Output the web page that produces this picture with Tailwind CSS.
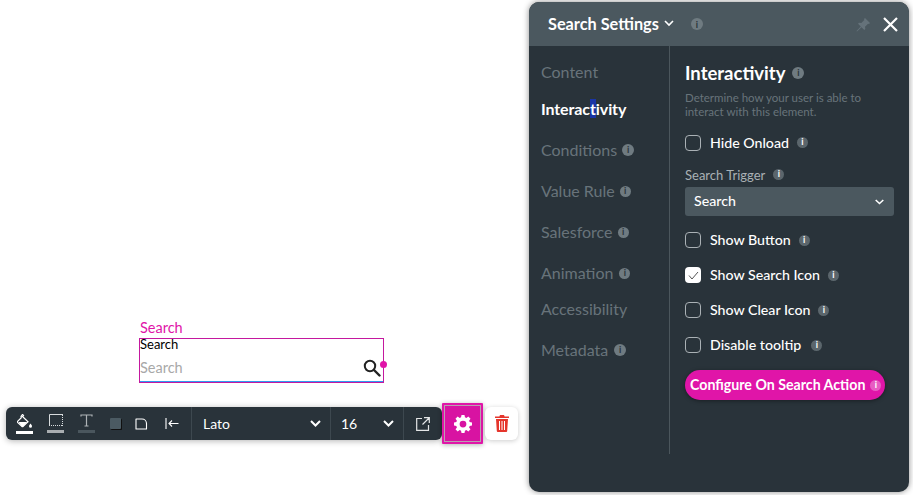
<!DOCTYPE html>
<html lang="en">
<head>
  <meta charset="UTF-8">
  <title>Search Settings</title>
  <script src="https://cdn.jsdelivr.net/npm/@tailwindcss/browser@4"></script>
</head>
<body class="bg-white overflow-hidden font-['Lato',sans-serif]">
  <div class="relative w-[913px] h-[495px] overflow-hidden">

    <!-- Search element on the canvas -->
    <div class="absolute left-[139px] top-[319px] w-[245px]">
      <div class="text-[14.5px] leading-[17px] mb-[2px] text-[#e015a8] pl-px">Search</div>
      <div class="relative h-[45px] border border-[#c4189f] shadow-[inset_0_-1px_0_#2f9bf0]">
        <div class="text-[13px] leading-[11px]">Search</div>
        <div class="flex items-center justify-between pr-[2px] mt-[9px]">
          <span class="text-[14.5px] leading-[18px] text-[#a8a8a8]">Search</span>
          <svg class="w-[18px] h-[18px]" viewBox="0 0 18 18" fill="none" stroke="#222" stroke-width="2"><circle cx="7" cy="7" r="5.2"/><path d="M11 11l5.5 5.5" stroke-linecap="round" stroke-width="2.4"/></svg>
        </div>
        <span class="absolute right-[-4px] top-[22px] w-[7px] h-[7px] rounded-full bg-[#e015a8]"></span>
      </div>
    </div>

    <!-- Toolbar -->
    <div class="absolute left-[6px] top-[403px] flex items-center">
      <div class="flex items-center h-[33px] w-[436px] bg-[#29333a] rounded-[6px] text-white shadow-[0_1px_6px_rgba(0,0,0,0.3)]">
        <div class="flex items-center w-[186px] h-full pl-[10px] border-r border-[#3d484f]">
          <div class="flex flex-col items-center w-[17px]">
            <svg class="w-[16px] h-[15px]" viewBox="0 0 16 15" fill="white"><path d="M5.5 0.5l1 1-1 1 5.500 5.200-4.800 4.600a1 1 0 0 1-1.400 0L0.800 8.600a1 1 0 0 1 0-1.400L4.300 3.700 4 2.400z" fill="none" stroke="white" stroke-width="1.200"/><path d="M1.500 8h8.500l-3.800 4.500h-1.500z"/><path d="M13.500 9.500c1 1.400 1.500 2 1.500 2.800a1.500 1.500 0 0 1-3 0c0-.8.500-1.400 1.500-2.800z"/></svg>
            <span class="w-[17px] h-[3px] bg-white mt-[2px]"></span>
          </div>
          <div class="flex flex-col items-center w-[17px] ml-[14px]">
            <svg class="w-[14px] h-[12px]" viewBox="0 0 14 12" fill="none" stroke="#d8dcde"><path d="M.5 12V.5H14"/><path d="M13.500 1v11M0 11.500h14" stroke-dasharray="1 1"/></svg>
            <span class="w-[17px] h-[3px] bg-[#a9adb0] mt-[4px]"></span>
          </div>
          <div class="flex flex-col items-center w-[17px] ml-[14px]">
            <svg class="w-[13px] h-[13px]" viewBox="0 0 13 13" fill="none" stroke="#aeb3b6" stroke-width="1.200"><path d="M1 2.500V1h11v1.500M6.500 1v11M4.500 12h4"/></svg>
            <span class="w-[17px] h-[3px] bg-[#4a565d] mt-[3px]"></span>
          </div>
          <span class="w-[11px] h-[11px] ml-[15px] bg-[#4b5a62] rounded-[1px] shadow-[1px_1px_0_#111]"></span>
          <svg class="w-[13px] h-[12px] ml-[14px]" viewBox="0 0 13 12" fill="none" stroke="white" stroke-width="1.100"><path d="M1 1h6c2.500 0 4.500 2 4.500 4.500V11H1z" stroke-linejoin="round"/></svg>
          <svg class="w-[14px] h-[11px] ml-[17px]" viewBox="0 0 14 11" fill="none" stroke="white" stroke-width="1.100"><path d="M1 0v11M13.500 5.500H4M7 2.500l-3 3 3 3"/></svg>
        </div>
        <div class="flex items-center justify-between w-[139px] h-full pl-[11px] pr-[9px] border-r border-[#3d484f] text-[14px]">
          <span>Lato</span>
          <svg class="w-[11px] h-[7px]" viewBox="0 0 11 7" fill="none" stroke="white" stroke-width="2"><path d="M1 1l4.500 4.500L10 1"/></svg>
        </div>
        <div class="flex items-center justify-between w-[73px] h-full pl-[10px] pr-[9px] border-r border-[#3d484f] text-[14px]">
          <span>16</span>
          <svg class="w-[11px] h-[7px]" viewBox="0 0 11 7" fill="none" stroke="white" stroke-width="2"><path d="M1 1l4.500 4.500L10 1"/></svg>
        </div>
        <div class="flex items-center justify-center flex-1">
          <svg class="w-[14px] h-[14px]" viewBox="0 0 14 14" fill="none" stroke="#e4e6e7" stroke-width="1.200"><path d="M6 1.500H.7v11.800h11.800V8M8 .7h5.300V6M13 1L6.500 7.500"/></svg>
        </div>
      </div>
      <div class="flex items-center justify-center w-[41px] h-[41px] bg-[#d813a2] border-[3px] border-[#e015a8] outline outline-1 outline-[#b9a0b0] -outline-offset-[3px] rounded-[1px] shadow-[0_1px_5px_rgba(0,0,0,0.3)]">
        <svg class="w-[18px] h-[18px]" viewBox="0 0 24 24" fill="white"><path fill-rule="evenodd" d="M10 1h4l.6 3.100 1.900.8L19.100 3 22 5.900l-1.900 2.600.8 1.900L24 11v4l-3.100.6-.8 1.900 1.900 2.600L19.100 23l-2.600-1.900-1.900.8L14 25h-4l-.6-3.100-1.900-.8L4.900 23 2 20.100l1.900-2.600-.8-1.900L0 15v-4l3.100-.6.8-1.900L2 5.900 4.900 3l2.600 1.900 1.900-.8zM12 8.500a4.500 4.500 0 1 0 0 9 4.500 4.500 0 0 0 0-9z" transform="translate(0 -1)"/></svg>
      </div>
      <div class="flex items-center justify-center w-[33px] h-[33px] ml-[2px] bg-white rounded-[6px] shadow-[0_1px_5px_rgba(0,0,0,0.2)]">
        <svg class="w-[14px] h-[17px]" viewBox="0 0 14 17" fill="#e5352c"><path d="M5 0h4l.6 1.500H14V3H0V1.500h4.400z"/><path fill-rule="evenodd" d="M1 4h12l-.8 12a1 1 0 0 1-1 1H2.800a1 1 0 0 1-1-1zM4 6v9h1V6zm2.500 0v9h1V6zM9 6v9h1V6z"/></svg>
      </div>
    </div>

    <!-- Settings panel -->
    <div class="absolute left-[529px] top-[2px] flex flex-col w-[380px] h-[490px] bg-[#29333a] rounded-[10px] overflow-hidden text-white shadow-[0_0_6px_rgba(0,0,0,0.45)]">
      <div class="flex items-center h-[44px] shrink-0 bg-[#4b585f] pl-[19px] pr-[11px]">
        <span class="text-[16.3px] font-bold">Search Settings</span>
        <svg class="w-[10px] h-[7px] ml-[5px] mb-[2px]" viewBox="0 0 10 7" fill="none" stroke="white" stroke-width="1.600"><path d="M1 1l4 4 4-4"/></svg>
        <span class="flex items-center justify-center w-[12px] h-[12px] ml-[17px] rounded-full bg-[#6f7b81] text-[9px] font-bold leading-none text-[#29333a]">i</span>
        <svg class="w-[15px] h-[15px] ml-auto" viewBox="0 0 15 15" fill="#65727a"><path d="M9 1l5 5-1 1-1-.3-3 3 .3 2.300-1 1-2.800-2.800L1 14.500 .5 14l4.300-4.500L2 6.700l1-1 2.300.3 3-3L8 2z"/></svg>
        <svg class="w-[15px] h-[15px] ml-[12px]" viewBox="0 0 15 15" fill="none" stroke="white" stroke-width="2.200"><path d="M1 1l13 13M14 1L1 14"/></svg>
      </div>

      <div class="flex flex-1 min-h-0">
        <!-- Nav -->
        <div class="w-[141px] h-[408px] shrink-0 border-r border-[#4b565c] pl-[12px] pt-[16px] text-[16px] leading-[20px] text-[#68737a]">
          <div>Content</div>
          <div class="mt-[17px] font-bold text-white tracking-[-0.1px]">Interac<span class="bg-[#1a35a5]">t</span>ivity</div>
          <div class="mt-[21px] flex items-center gap-[5px]">Conditions <span class="flex items-center justify-center w-[12px] h-[12px] rounded-full bg-[#6f7b81] text-[9px] font-bold text-[#29333a]">i</span></div>
          <div class="mt-[21px] flex items-center gap-[5px]">Value Rule <span class="flex items-center justify-center w-[11px] h-[11px] rounded-full bg-[#6f7b81] text-[9px] font-bold text-[#29333a]">i</span></div>
          <div class="mt-[21px] flex items-center gap-[5px]">Salesforce <span class="flex items-center justify-center w-[11px] h-[11px] rounded-full bg-[#6f7b81] text-[9px] font-bold text-[#29333a]">i</span></div>
          <div class="mt-[21px] flex items-center gap-[6px]">Animation <span class="flex items-center justify-center w-[11px] h-[11px] rounded-full bg-[#6f7b81] text-[9px] font-bold text-[#29333a]">i</span></div>
          <div class="mt-[16px]">Accessibility</div>
          <div class="mt-[21px] flex items-center gap-[6px]">Metadata <span class="flex items-center justify-center w-[12px] h-[12px] rounded-full bg-[#6f7b81] text-[9px] font-bold text-[#29333a]">i</span></div>
        </div>

        <!-- Content -->
        <div class="flex-1 pl-[15px] pr-[15px] pt-[15px]">
          <div class="flex items-center gap-[7px]">
            <span class="text-[18.5px] leading-[24px] font-bold">Interactivity</span>
            <span class="flex items-center justify-center w-[12px] h-[12px] rounded-full bg-[#6f7b81] text-[9px] font-bold text-[#29333a]">i</span>
          </div>
          <p class="mt-[6px] text-[11.5px] leading-[14px] text-[#68737a]">Determine how your user is able to<br>interact with this element.</p>

          <div class="mt-[14px] flex items-center text-[14.2px] font-medium h-[20px]">
            <span class="w-[16px] h-[16px] rounded-[4px] border border-[#aab1b5]"></span>
            <span class="ml-[9px]">Hide Onload</span>
            <span class="flex items-center justify-center w-[11px] h-[11px] ml-[8px] mb-[2px] rounded-full bg-[#5b666c] text-[9px] font-bold text-white">i</span>
          </div>

          <div class="mt-[14px] flex items-center text-[13px] leading-[16px] text-[#aab1b5]">
            Search Trigger
            <span class="flex items-center justify-center w-[11px] h-[11px] ml-[8px] mb-[2px] rounded-full bg-[#5b666c] text-[9px] font-bold text-white">i</span>
          </div>
          <div class="mt-[4px] flex items-center justify-between h-[29px] w-[209px] rounded-[3px] bg-[#4b585f] pl-[9px] pr-[10px] text-[14.2px] font-medium">
            <span class="mb-[2px]">Search</span>
            <svg class="w-[9px] h-[6px]" viewBox="0 0 9 6" fill="none" stroke="white" stroke-width="1.600"><path d="M.7 1l3.800 3.500L8.300 1"/></svg>
          </div>

          <div class="mt-[14px] flex items-center text-[14.2px] font-medium h-[20px]">
            <span class="w-[16px] h-[16px] rounded-[4px] border border-[#aab1b5]"></span>
            <span class="ml-[9px]">Show Button</span>
            <span class="flex items-center justify-center w-[11px] h-[11px] ml-[8px] rounded-full bg-[#5b666c] text-[9px] font-bold text-white">i</span>
          </div>
          <div class="mt-[15px] flex items-center text-[14.2px] font-medium h-[20px]">
            <span class="flex items-center justify-center w-[16px] h-[16px] rounded-[4px] bg-white">
              <svg class="w-[11px] h-[9px]" viewBox="0 0 11 9" fill="none" stroke="#555" stroke-width="1"><path d="M1 4.500L4 8l6-7"/></svg>
            </span>
            <span class="ml-[9px]">Show Search Icon</span>
            <span class="flex items-center justify-center w-[11px] h-[11px] ml-[8px] rounded-full bg-[#5b666c] text-[9px] font-bold text-white">i</span>
          </div>
          <div class="mt-[15px] flex items-center text-[14.2px] font-medium h-[20px]">
            <span class="w-[16px] h-[16px] rounded-[4px] border border-[#aab1b5]"></span>
            <span class="ml-[9px]">Show Clear Icon</span>
            <span class="flex items-center justify-center w-[11px] h-[11px] ml-[8px] rounded-full bg-[#5b666c] text-[9px] font-bold text-white">i</span>
          </div>
          <div class="mt-[15px] flex items-center text-[14.2px] font-medium h-[20px]">
            <span class="w-[16px] h-[16px] rounded-[4px] border border-[#aab1b5]"></span>
            <span class="ml-[9px]">Disable tooltip</span>
            <span class="flex items-center justify-center w-[11px] h-[11px] ml-[10px] rounded-full bg-[#5b666c] text-[9px] font-bold text-white">i</span>
          </div>

          <div class="mt-[15px] flex items-center h-[30px] w-[200px] rounded-full bg-[#e015a8] pl-[5px] text-[14.2px] font-bold shadow-[0_1px_4px_rgba(0,0,0,0.4)]">
            Configure On Search Action
            <span class="flex items-center justify-center w-[11px] h-[11px] ml-[5px] rounded-full bg-[#e85cc3] text-[9px] font-bold text-white">i</span>
          </div>
        </div>
      </div>
    </div>
  </div>
</body>
</html>
